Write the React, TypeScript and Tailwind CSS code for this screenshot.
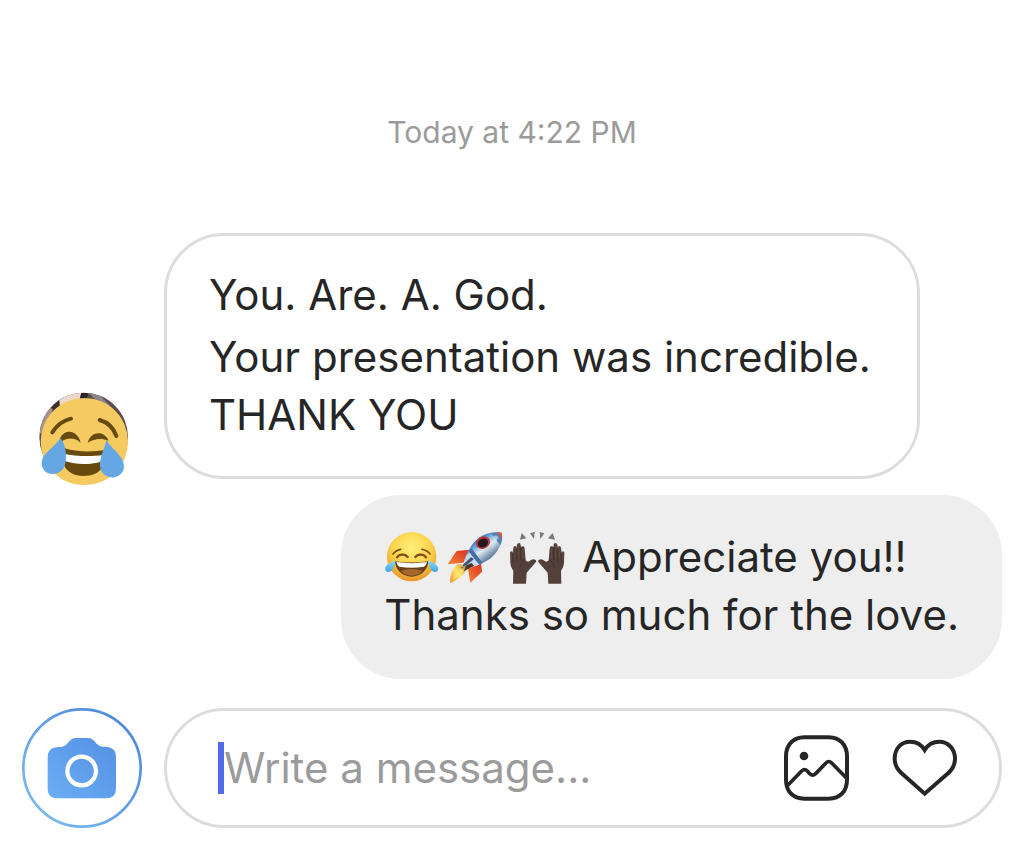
import { useState } from "react"
import type { ReactNode } from "react"

function JoyAvatar() {
  return (
    <svg className="block h-[94px] w-[92px]" viewBox="48 36 276 282" role="img" aria-label="Profile picture">
      <defs>
        <clipPath id="photo">
          <circle cx="191" cy="171" r="133" />
        </clipPath>
      </defs>
      <g clipPath="url(#photo)">
        <rect x="48" y="36" width="276" height="282" fill="#5d4d4d" />
        <path d="M48 160L80 92L100 78L92 110L70 160Z" fill="#a8928a" />
        <path d="M92 84L118 60L130 66L110 92Z" fill="#3a2d2f" />
        <path d="M118 60L152 38L184 38L178 60L120 84Z" fill="#ecd9c9" />
        <path d="M184 38L205 40L200 56L180 56Z" fill="#2b2528" />
        <path d="M205 38L240 46L300 110L270 90L225 58Z" fill="#8b8488" />
      </g>
      <circle cx="193" cy="185" r="131" fill="#f5cb61" />
      <g fill="none" stroke="#664a0e" strokeWidth="12" strokeLinecap="round">
        <path d="M97 157C110 137 130 121 153 116" />
        <path d="M239 120C264 127 281 144 289 168" />
      </g>
      <path d="M119 178C130 146 172 146 182 188C165 172 142 172 126 184Z" fill="#664a0e" />
      <path d="M203 188C213 151 254 151 266 182C245 174 224 175 203 188Z" fill="#664a0e" />
      <path d="M130 203C165 216 218 217 254 210L249 258C238 280 216 288 190 288C164 288 142 278 132 256Z" fill="#664a0e" />
      <path d="M130 221C168 230 214 230 250 225Q248 238 243 245C207 255 166 254 135 243Z" fill="#fff" />
      <path d="M121 174C133 186 141 216 137 244C135 268 120 282 98 282C76 282 64 266 65 246C67 220 100 206 121 174Z" fill="#65a6e5" />
      <path d="M259 180C275 207 312 230 312 258C312 280 294 294 273 292C250 290 239 272 240 250C242 224 254 206 259 180Z" fill="#65a6e5" />
    </svg>
  )
}

function JoyEmoji() {
  return (
    <svg className="h-[55px] w-[57px]" viewBox="30 30 171 165" role="img" aria-label="Face with tears of joy">
      <defs>
        <radialGradient id="joyFace" cx="50%" cy="32%" r="68%">
          <stop offset="0" stopColor="#fff17a" />
          <stop offset="0.6" stopColor="#fbd04a" />
          <stop offset="1" stopColor="#e69528" />
        </radialGradient>
        <linearGradient id="joyTear" x1="0" y1="0" x2="0" y2="1">
          <stop offset="0" stopColor="#8fdcfa" />
          <stop offset="1" stopColor="#39a5e6" />
        </linearGradient>
      </defs>
      <circle cx="113" cy="110" r="74" fill="url(#joyFace)" />
      <g fill="none" stroke="#84501a" strokeLinecap="round">
        <path d="M57 102Q65 91 80 88M144 88Q160 91 168 102" strokeWidth="5" />
        <path d="M69 112C76 101 93 101 101 111M124 111C132 101 149 101 156 112" strokeWidth="7" />
      </g>
      <path d="M63 124Q113 131 163 124C162 149 142 170 113 170C84 170 64 149 63 124Z" fill="#68401b" />
      <path d="M67 126Q113 133 159 126Q157 137 150 140Q113 146 76 140Q69 136 67 126Z" fill="#fff" />
      <path d="M80 153Q113 141 146 153Q133 167 113 167Q93 167 80 153Z" fill="#a5672c" />
      <path d="M65 121C60 143 54 156 43 156C30 156 31 139 42 132Q50 128 65 121Z" fill="url(#joyTear)" />
      <path d="M161 121C166 143 172 156 183 156C196 156 195 139 184 132Q176 128 161 121Z" fill="url(#joyTear)" />
    </svg>
  )
}

function RocketEmoji() {
  return (
    <svg className="h-[55px] w-[57px]" viewBox="216 30 171 165" role="img" aria-label="Rocket">
      <defs>
        <linearGradient id="hull" x1="0.25" y1="0.2" x2="0.75" y2="0.8">
          <stop offset="0" stopColor="#2f63a4" />
          <stop offset="0.25" stopColor="#6fa6d8" />
          <stop offset="0.5" stopColor="#e3eaf0" />
          <stop offset="0.75" stopColor="#8ba3b9" />
          <stop offset="1" stopColor="#3c5c87" />
        </linearGradient>
        <linearGradient id="finRed" x1="0" y1="1" x2="1" y2="0">
          <stop offset="0" stopColor="#f5833a" />
          <stop offset="1" stopColor="#d92f1c" />
        </linearGradient>
        <linearGradient id="flame" x1="0" y1="1" x2="1" y2="0">
          <stop offset="0" stopColor="#ef8b27" />
          <stop offset="0.5" stopColor="#ffe66a" />
          <stop offset="1" stopColor="#d6952d" />
        </linearGradient>
      </defs>
      <path d="M262 133L276 151C266 170 247 182 229 189C226 165 236 141 254 132Z" fill="url(#flame)" />
      <path d="M287 89L248 93L221 133L269 128Z" fill="url(#finRed)" />
      <path d="M321 131L324 155L289 188L282 146Z" fill="url(#finRed)" />
      <path d="M382 38C389 62 374 96 348 116C330 129 302 139 282 143L269 128C276 100 293 68 315 53C335 39 362 34 382 38Z" fill="url(#hull)" />
      <path d="M382 38C387 51 384 65 379 76L351 40Q368 35 382 38Z" fill="#5581b5" />
      <path d="M382 38Q385 49 383 57L368 37Q376 36 382 38Z" fill="#d0574d" />
      <path d="M292 84L326 129L310 136L279 103Z" fill="#466da2" />
      <path d="M285 96L316 134L301 139L275 112Z" fill="#c8dae9" />
      <path d="M293 129L300 137L270 154L260 143Z" fill="#4b382c" />
      <ellipse cx="327" cy="68" rx="22" ry="18" fill="#b5393c" transform="rotate(-28 327 68)" />
      <ellipse cx="327" cy="69" rx="16" ry="13" fill="#25171b" transform="rotate(-28 327 69)" />
      <path d="M359 47Q370 44 374 52L354 86Q361 64 359 47Z" fill="#cfe0ee" opacity="0.7" />
      <path d="M300 117L271 141L265 136L291 112Z" fill="#3d567a" />
      <path d="M276 135L245 158L235 181Q258 170 271 151Z" fill="#ffe174" opacity="0.7" />
    </svg>
  )
}

function Hand() {
  return (
    <>
      <path
        d="M417 191L418 153Q410 143 409 130L408 99Q408 94 412 94Q416 94 416 99L418 84Q419 78 423 78Q427 78 427 84L429 74Q430 69 435 69Q440 69 440 75L441 82Q443 77 448 79Q452 80 452 86L455 121Q462 129 470 121Q477 116 484 119Q489 122 484 128L458 158L456 191Z"
        fill="#54403a"
      />
      <path d="M417 100V127M428 86V123M440 82V122M452 117Q438 132 437 145" fill="none" stroke="#3a2b27" strokeWidth="2" />
      <path d="M413 99V122M423 85V115M434 76V115M446 86V114" fill="none" stroke="#6b5147" strokeWidth="2" />
    </>
  )
}

function RaisedHandsEmoji() {
  return (
    <svg className="h-[55px] w-[57px]" viewBox="402 30 171 165" role="img" aria-label="Raising hands">
      <Hand />
      <g transform="translate(979 0) scale(-1 1)">
        <Hand />
      </g>
      <path d="M443 39L457 55L438 59ZM468 40L482 36L480 57ZM511 40L497 36L499 57ZM536 39L522 55L543 59Z" fill="#77777a" />
    </svg>
  )
}

function CameraIcon() {
  return (
    <svg className="block h-[120px] w-[120px]" viewBox="36 24 360 360" aria-hidden="true">
      <defs>
        <linearGradient id="ring" x1="0" y1="1" x2="1" y2="0">
          <stop offset="0" stopColor="#80c0f5" />
          <stop offset="1" stopColor="#4981d5" />
        </linearGradient>
        <linearGradient id="body" x1="0" y1="1" x2="1" y2="0">
          <stop offset="0" stopColor="#6badf5" />
          <stop offset="1" stopColor="#5590e4" />
        </linearGradient>
      </defs>
      <circle cx="216" cy="204" r="176" fill="none" stroke="url(#ring)" strokeWidth="8" />
      <path
        d="M144 141H153C174 140 176 114 198 114H233C254 114 258 138 276 140H288Q318 142 318 171V266Q318 295 288 295H143Q113 295 113 266V171Q113 143 144 141Z"
        fill="url(#body)"
      />
      <circle cx="215" cy="213" r="43" fill="none" stroke="#fff" strokeWidth="13" />
    </svg>
  )
}

function GalleryIcon() {
  return (
    <svg className="block h-[68px] w-[67px]" viewBox="39 102 201 204" fill="none" stroke="#262626" strokeWidth="12" aria-hidden="true">
      <path d="M103 112H176C211 112 231 136 231 169V239C231 273 211 296 176 296H103C68 296 48 273 48 239V169C48 136 68 112 103 112Z" />
      <path d="M52 257L94 214Q103 204 112 213L119 221Q128 230 137 221L168 189Q176 180 185 189L230 235" strokeWidth="11" />
      <circle cx="102" cy="168" r="13" fill="#262626" stroke="none" />
    </svg>
  )
}

function HeartIcon() {
  return (
    <svg className="block h-[58px] w-[66px]" viewBox="367 117 198 174" fill="none" stroke="#262626" strokeWidth="12" aria-hidden="true">
      <path d="M465 150C455 133 441 125 421 125C394 125 375 147 375 176C375 194 382 207 395 219L465 281L536 219C549 207 556 194 556 176C556 147 536 125 509 125C489 125 475 133 465 150Z" />
    </svg>
  )
}

function Bubble({ sent = false, children }: { sent?: boolean; children: ReactNode }) {
  return (
    <div
      className={`w-fit rounded-[60px] border-[3px] pt-[30px] pb-[32px] text-[42px] leading-[58px] text-[#262626] ${
        sent ? "border-[#eeeeee] bg-[#eeeeee] px-[40px]" : "border-[#dddddd] bg-white pr-[46px] pl-[42px]"
      }`}
    >
      {children}
    </div>
  )
}

export default function App() {
  const [message, setMessage] = useState("")

  return (
    <main className="min-h-screen bg-white px-[22px] pt-[111px] pb-[14px] font-['Inter',sans-serif]">
      <p className="text-center text-[30px] leading-[42px] text-[#9b9b9b]">Today at 4:22 PM</p>

      <div className="mt-20 flex items-end gap-[22px]">
        <div className="-mb-[7px] flex w-[120px] shrink-0 justify-center">
          <JoyAvatar />
        </div>
        <Bubble>
          <p>You. Are. A. God.</p>
          <p className="mt-1">
            Your presentation was incredible.
            <br />
            THANK YOU
          </p>
        </Bubble>
      </div>

      <div className="mt-4 flex justify-end">
        <Bubble sent>
          <div className="flex items-center gap-[5px]">
            <JoyEmoji />
            <RocketEmoji />
            <RaisedHandsEmoji />
            <p className="ml-3">Appreciate you!!</p>
          </div>
          <p>Thanks so much for the love.</p>
        </Bubble>
      </div>

      <form className="mt-[29px] flex gap-[22px]" onSubmit={e => e.preventDefault()}>
        <button type="button" aria-label="Open camera" className="shrink-0 rounded-full">
          <CameraIcon />
        </button>
        <div className="flex h-[120px] min-w-0 flex-1 items-center rounded-full border-[3px] border-[#dddddd] pr-[41px] pl-[51px]">
          <span className="h-[52px] w-[6px] shrink-0 bg-[#5069e8]" />
          <input
            type="text"
            aria-label="Message"
            placeholder="Write a message..."
            value={message}
            onChange={e => setMessage(e.target.value)}
            className="min-w-0 flex-1 bg-transparent text-[42px] leading-[58px] text-[#262626] outline-none placeholder:text-[#9b9b9b]"
          />
          <button type="button" aria-label="Send a photo" className="shrink-0">
            <GalleryIcon />
          </button>
          <button type="button" aria-label="Send a like" className="ml-[42px] shrink-0">
            <HeartIcon />
          </button>
        </div>
      </form>
    </main>
  )
}
